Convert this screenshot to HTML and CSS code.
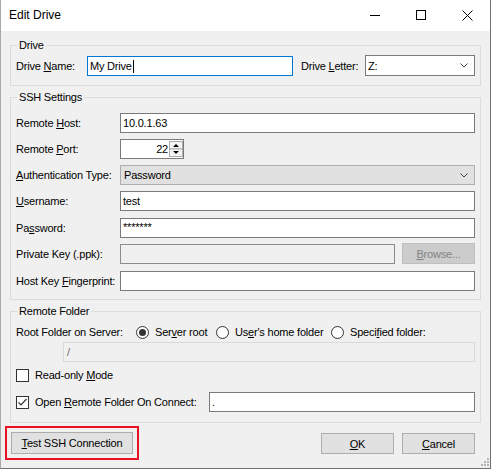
FILE: index.html
```html
<!DOCTYPE html>
<html>
<head>
<meta charset="utf-8">
<title>Edit Drive</title>
<link rel="stylesheet" href="styles.css">
</head>
<body>
<div class="window">
  <div class="titlebar">
    <div class="title">Edit Drive</div>
    <div class="caption">
      <div class="cbtn"><svg width="10" height="10" viewBox="0 0 10 10"><path d="M0 5.5H10" stroke="#000" stroke-width="1" fill="none"/></svg></div>
      <div class="cbtn"><svg width="10" height="10" viewBox="0 0 10 10"><rect x="0.5" y="0.5" width="9" height="9" stroke="#000" stroke-width="1" fill="none"/></svg></div>
      <div class="cbtn"><svg width="11" height="11" viewBox="0 0 11 11"><path d="M0.5 0.5L10.5 10.5M10.5 0.5L0.5 10.5" stroke="#000" stroke-width="1" fill="none"/></svg></div>
    </div>
  </div>

  <div class="client">
    <fieldset class="group g-drive">
      <legend>Drive</legend>
      <div class="row">
        <span class="lbl w-name">Drive <u>N</u>ame:</span>
        <div class="field focus w-nameinput"><span>My Drive</span><span class="caret"></span></div>
        <span class="lbl w-letter">Drive <u>L</u>etter:</span>
        <div class="field combo-edit w-combo"><span>Z:</span><svg class="chev" width="8" height="5" viewBox="0 0 8 5"><path d="M0.5 0.5L4 4L7.5 0.5" stroke="#444" stroke-width="1" fill="none"/></svg></div>
      </div>
    </fieldset>

    <fieldset class="group g-ssh">
      <legend>SSH Settings</legend>
      <div class="row">
        <span class="lbl w-ssh">Remote <u>H</u>ost:</span>
        <div class="field grow"><span>10.0.1.63</span></div>
      </div>
      <div class="row">
        <span class="lbl w-ssh">Remote <u>P</u>ort:</span>
        <div class="field spinfield">
          <span class="num">22</span>
          <svg class="spin" width="14" height="16" viewBox="0 0 14 16">
            <rect x="0.5" y="0.5" width="13" height="7.5" fill="#f4f4f4" stroke="#acacac"/>
            <rect x="0.5" y="8" width="13" height="7.5" fill="#f4f4f4" stroke="#acacac"/>
            <polygon points="4,6 10,6 7,3" fill="#000"/>
            <polygon points="4,10 10,10 7,13" fill="#000"/>
          </svg>
        </div>
      </div>
      <div class="row">
        <span class="lbl w-ssh"><u>A</u>uthentication Type:</span>
        <div class="field combo grow"><span>Password</span><svg class="chev" width="8" height="5" viewBox="0 0 8 5"><path d="M0.5 0.5L4 4L7.5 0.5" stroke="#444" stroke-width="1" fill="none"/></svg></div>
      </div>
      <div class="row">
        <span class="lbl w-ssh"><u>U</u>sername:</span>
        <div class="field grow"><span>test</span></div>
      </div>
      <div class="row plus1">
        <span class="lbl w-ssh">Pa<u>s</u>sword:</span>
        <div class="field grow pwd"><span>*******</span></div>
      </div>
      <div class="row">
        <span class="lbl w-ssh">Private Key (.ppk):</span>
        <div class="field disabled w-key"></div>
        <div class="btn btn-disabled w-browse"><span><u>B</u>rowse...</span></div>
      </div>
      <div class="row plus1">
        <span class="lbl w-ssh">Host Key <u>F</u>ingerprint:</span>
        <div class="field grow"></div>
      </div>
    </fieldset>

    <fieldset class="group g-remote">
      <legend>Remote Folder</legend>
      <div class="row">
        <span class="lbl w-root">Root Folder on Server:</span>
        <span class="opt w-r1"><span class="radio on"></span><span>Ser<u>v</u>er root</span></span>
        <span class="opt w-r2"><span class="radio"></span><span>Us<u>e</u>r's home folder</span></span>
        <span class="opt"><span class="radio"></span><span>Speci<u>f</u>ied folder:</span></span>
      </div>
      <div class="row path-row">
        <div class="field pathbox grow"><span>/</span></div>
      </div>
      <div class="row chk-row1">
        <span class="opt"><span class="check"></span><span>Read-only <u>M</u>ode</span></span>
      </div>
      <div class="row chk-row2">
        <span class="opt w-open"><span class="check"><svg width="11" height="11" viewBox="0 0 11 11"><path d="M1.5 5.5L4 8L9.5 2" stroke="#333" stroke-width="1.2" fill="none"/></svg></span><span>Open <u>R</u>emote Folder On Connect:</span></span>
        <div class="field grow"><span>.</span></div>
      </div>
    </fieldset>

    <div class="footer">
      <div class="btn btn-test"><span><u>T</u>est SSH Connection</span></div>
      <div class="btn btn-ok"><span><u>O</u>K</span></div>
      <div class="btn btn-cancel"><span><u>C</u>ancel</span></div>
    </div>
  </div>

  <svg class="grip" width="9" height="9" viewBox="0 0 9 9">
    <rect x="7" y="1" width="2" height="2" fill="#b4b4b4"/>
    <rect x="4" y="4" width="2" height="2" fill="#b4b4b4"/>
    <rect x="7" y="4" width="2" height="2" fill="#b4b4b4"/>
    <rect x="1" y="7" width="2" height="2" fill="#b4b4b4"/>
    <rect x="4" y="7" width="2" height="2" fill="#b4b4b4"/>
    <rect x="7" y="7" width="2" height="2" fill="#b4b4b4"/>
  </svg>
</div>
</body>
</html>
```

FILE: styles.css
```css
html, body {
  margin: 0;
  padding: 0;
  background: #f0f0f0;
}

.window {
  position: relative;
  width: 491px;
  height: 469px;
  box-sizing: border-box;
  border-left: 1px solid #a8a8a8;
  border-right: 1px solid #707070;
  border-bottom: 1px solid #707070;
  background: #f0f0f0;
  overflow: hidden;
  font-family: "Liberation Sans", Arial, sans-serif;
  font-size: 11px;
  letter-spacing: -0.2px;
  color: #000;
}

.titlebar {
  height: 31px;
  background: #fff;
  display: flex;
  align-items: stretch;
}

.title {
  flex: 1;
  padding-left: 8px;
  font-size: 12px;
  letter-spacing: 0;
  line-height: 31px;
}

.caption {
  display: flex;
}

.cbtn {
  width: 46px;
  height: 30px;
  display: flex;
  align-items: center;
  justify-content: center;
}

.client {
  padding: 7px 9px 0 9px;
}

.group {
  margin: 0;
  min-width: 0;
  border: 1px solid #dcdcdc;
  padding: 3px 5px 9px 5px;
}

.group legend {
  margin-left: 1px;
  padding: 0 2px;
  line-height: 15px;
  font-size: 11px;
}

.g-ssh {
  margin-top: 4px;
  padding-top: 8px;
  padding-bottom: 8px;
}

.g-remote {
  margin-top: 4px;
  padding-top: 3px;
  padding-bottom: 10px;
}

.row {
  display: flex;
  align-items: center;
  height: 20px;
}

.g-ssh .row + .row {
  margin-top: 6px;
}

.g-ssh .row.plus1 {
  margin-top: 7px;
}

.lbl {
  flex: none;
  white-space: nowrap;
}

.w-name { width: 71px; }
.w-nameinput { width: 206px; }
.w-letter { width: 64px; margin-left: 8px; }
.w-combo { width: 110px; }
.w-ssh { width: 104px; }
.w-key { width: 275px; }
.w-browse { width: 73px; margin-left: 7px; height: 22px; align-self: flex-end; }
.w-root { width: 120px; }
.w-r1 { width: 80px; }
.w-r2 { width: 115px; }
.w-open { width: 193px; }

.grow { flex: 1; }

.field {
  box-sizing: border-box;
  height: 20px;
  border: 1px solid #7a7a7a;
  background: #fff;
  padding: 0 2px;
  display: flex;
  align-items: center;
  white-space: nowrap;
  flex-shrink: 0;
}

.field.grow {
  flex: 1 1 auto;
}

.field.focus {
  border-color: #0078d7;
}

.caret {
  display: inline-block;
  width: 1px;
  height: 13px;
  background: #000;
  margin-left: 1px;
}

.combo-edit {
  height: 21px;
  padding-left: 2px;
  align-self: flex-start;
  margin-top: -1px;
}

.combo {
  background: #e1e1e1;
  border-color: #adadad;
  padding-left: 3px;
}

.chev {
  margin-left: auto;
  margin-right: 4px;
}

.spinfield {
  width: 64px;
  padding: 0 0 0 2px;
}

.num {
  margin-left: auto;
  margin-right: 1px;
}

.pwd {
  align-items: flex-start;
  padding-top: 2px;
}

.disabled {
  background: #f0f0f0;
  border-color: #8c8c8c;
}

.pathbox {
  margin-left: 47px;
  background: #f0f0f0;
  border-color: #d9d9d9;
  color: #6d6d6d;
  padding-left: 3px;
}

.opt {
  display: flex;
  align-items: center;
  white-space: nowrap;
  flex: none;
}

.radio {
  box-sizing: border-box;
  width: 13px;
  height: 13px;
  border: 1px solid #333;
  border-radius: 50%;
  background: #fff;
  margin-right: 6px;
  display: flex;
  align-items: center;
  justify-content: center;
  flex: none;
}

.radio.on::after {
  content: "";
  width: 7px;
  height: 7px;
  border-radius: 50%;
  background: #333;
}

.check {
  box-sizing: border-box;
  width: 13px;
  height: 13px;
  border: 1px solid #333;
  background: #fff;
  margin-right: 6px;
  display: flex;
  align-items: center;
  justify-content: center;
  flex: none;
}

.check svg {
  display: block;
}

.path-row {
  margin-top: 0;
}

.chk-row1 {
  margin-top: 3px;
}

.chk-row2 {
  margin-top: 7px;
}

.btn {
  box-sizing: border-box;
  height: 21px;
  border: 1px solid #adadad;
  background: #e1e1e1;
  display: flex;
  align-items: center;
  justify-content: center;
  white-space: nowrap;
  flex: none;
}

.btn-disabled {
  background: #cccccc;
  border-color: #bfbfbf;
  color: #838383;
}

.footer {
  display: flex;
  align-items: flex-end;
  margin-top: 9px;
  padding: 0 6px 0 1px;
}

.btn-test {
  width: 122px;
  height: 22px;
  outline: 2px solid #e81123;
  outline-offset: 4px;
}

.btn-ok {
  width: 73px;
  margin-left: auto;
}

.btn-cancel {
  width: 73px;
  margin-left: 8px;
}

.grip {
  position: absolute;
  right: 1px;
  bottom: 2px;
}
```
